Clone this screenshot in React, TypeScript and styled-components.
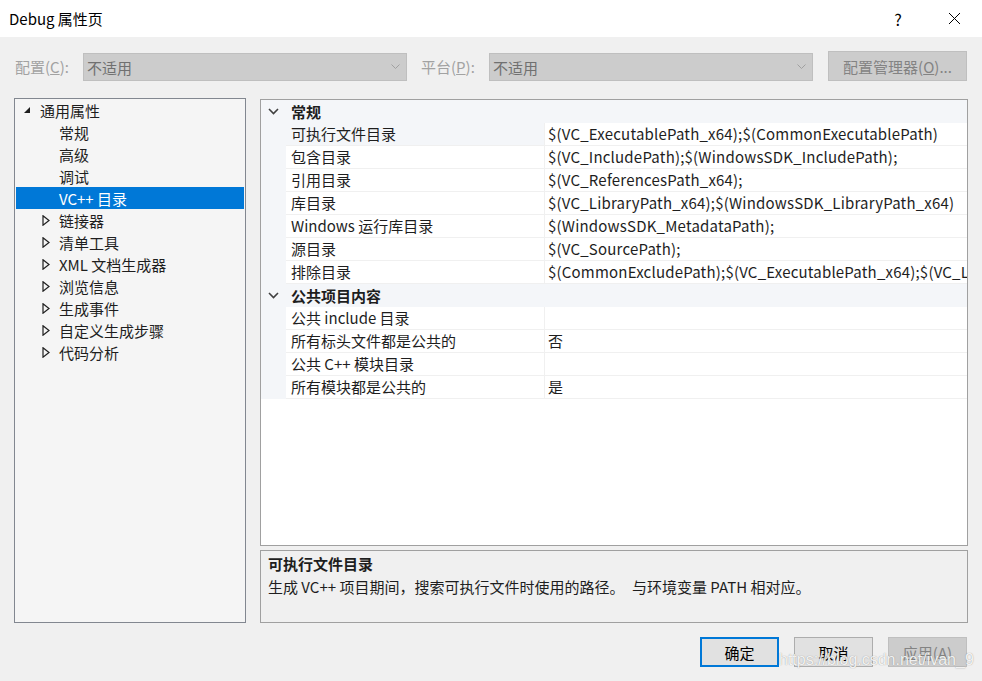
import { createGlobalStyle } from "styled-components";
import styled from "styled-components";

const GlobalStyle = createGlobalStyle`
  html, body {
    margin: 0;
    padding: 0;
    background: #f0f0f0;
  }
  body {
    font-family: "Noto Sans CJK SC", "Noto Sans", sans-serif;
    font-size: 15px;
    color: #1e1e1e;
  }
`;

const Window = styled.div`
  position: relative;
  width: 982px;
  height: 681px;
  background: #f0f0f0;
  display: flex;
  flex-direction: column;
  overflow: hidden;
`;

const TitleBar = styled.div`
  height: 37px;
  background: #ffffff;
  display: flex;
  align-items: center;
  padding-left: 9px;
  font-size: 15px;
  color: #000;
`;

const TitleText = styled.div`
  flex: 1;
`;

const TitleButton = styled.div`
  width: 56px;
  height: 37px;
  display: flex;
  align-items: center;
  justify-content: center;
  font-size: 16px;
  color: #000;
`;

const ConfigRow = styled.div`
  display: flex;
  align-items: flex-end;
  padding: 14px 15px 0 15px;
`;

const FieldLabel = styled.div<{ $gap?: number }>`
  width: 68px;
  flex: none;
  margin-left: ${(p) => p.$gap ?? 0}px;
  height: 28px;
  line-height: 28px;
  color: #a2a2a2;
  white-space: nowrap;
`;

const Combo = styled.div`
  width: 324px;
  flex: none;
  height: 28px;
  box-sizing: border-box;
  background: #cccccc;
  border: 1px solid #bfbfbf;
  display: flex;
  align-items: center;
  padding: 0 6px 0 3px;
  color: #707070;
`;

const ComboText = styled.div`
  flex: 1;
`;

const ManagerButton = styled.div`
  margin-left: 15px;
  width: 139px;
  flex: none;
  height: 30px;
  box-sizing: border-box;
  background: #cccccc;
  border: 1px solid #bfbfbf;
  display: flex;
  align-items: center;
  justify-content: center;
  color: #838383;
`;

const Main = styled.div`
  display: flex;
  gap: 14px;
  padding: 0 14px;
  margin-top: 17px;
  height: 525px;
`;

const TreePanel = styled.div`
  width: 232px;
  flex: none;
  box-sizing: border-box;
  border: 1px solid #828790;
  background: #f5f5f5;
  padding: 0 1px;
`;

const TreeRow = styled.div<{ $level: number; $selected?: boolean }>`
  height: 22px;
  display: flex;
  align-items: center;
  padding-left: ${(p) => 7 + p.$level * 19}px;
  background: ${(p) => (p.$selected ? "#0078d7" : "transparent")};
  color: ${(p) => (p.$selected ? "#ffffff" : "#1e1e1e")};
  white-space: nowrap;
`;

const Expander = styled.div`
  width: 17px;
  height: 22px;
  display: flex;
  align-items: center;
`;

const RightColumn = styled.div`
  flex: 1;
  min-width: 0;
  display: flex;
  flex-direction: column;
  gap: 4px;
`;

const Grid = styled.div`
  margin-top: 1px;
  height: 447px;
  box-sizing: border-box;
  border: 1px solid #a0a0a0;
  background: #ffffff;
  overflow: hidden;
`;

const GridRow = styled.div`
  display: flex;
  height: 23px;
`;

const Gutter = styled.div`
  width: 25px;
  flex: none;
  background: #f4f6f9;
  display: flex;
  align-items: center;
  justify-content: center;
`;

const CategoryName = styled.div`
  flex: 1;
  background: #f4f6f9;
  font-weight: bold;
  line-height: 23px;
  padding-left: 5px;
`;

const LabelCell = styled.div<{ $selected?: boolean }>`
  width: 259px;
  flex: none;
  box-sizing: border-box;
  padding-left: 5px;
  line-height: 22px;
  border-bottom: 1px solid #f0f0f0;
  border-right: 1px solid #f0f0f0;
  background: ${(p) => (p.$selected ? "#f4f6f9" : "#ffffff")};
  white-space: nowrap;
`;

const ValueCell = styled.div`
  flex: 1;
  min-width: 0;
  padding-left: 3px;
  line-height: 22px;
  letter-spacing: 0.2px;
  border-bottom: 1px solid #f0f0f0;
  white-space: nowrap;
  overflow: hidden;
`;

const Description = styled.div`
  height: 73px;
  box-sizing: border-box;
  border: 1px solid #a0a0a0;
  padding: 1px 7px;
  line-height: 23px;
`;

const DescTitle = styled.div`
  font-weight: bold;
`;

const Footer = styled.div`
  display: flex;
  justify-content: flex-end;
  gap: 15px;
  padding: 14px 15px 0 0;
`;

const DialogButton = styled.div<{ $kind: "default" | "normal" | "disabled" }>`
  width: 79px;
  height: 30px;
  box-sizing: border-box;
  display: flex;
  align-items: center;
  justify-content: center;
  background: ${(p) => (p.$kind === "disabled" ? "#cccccc" : "#e1e1e1")};
  border: ${(p) =>
    p.$kind === "default"
      ? "2px solid #0078d7"
      : p.$kind === "disabled"
      ? "1px solid #bfbfbf"
      : "1px solid #adadad"};
  color: ${(p) => (p.$kind === "disabled" ? "#838383" : "#000")};
`;

const Watermark = styled.div`
  position: absolute;
  left: 779px;
  top: 651px;
  font-family: "Liberation Sans", Arial, sans-serif;
  font-size: 16px;
  color: rgba(255, 255, 255, 0.9);
  text-shadow: 0 0 1px rgba(100, 100, 100, 0.7);
  pointer-events: none;
`;

const ChevronDown = ({ color = "#a0a0a0" }: { color?: string }) => (
  <svg width="9" height="6" viewBox="0 0 9 6">
    <polyline points="0.5,0.5 4.5,4.5 8.5,0.5" fill="none" stroke={color} strokeWidth="1" />
  </svg>
);

const GridChevron = () => (
  <svg width="11" height="7" viewBox="0 0 11 7">
    <polyline points="1,1 5.5,5.5 10,1" fill="none" stroke="#404040" strokeWidth="1.6" />
  </svg>
);

const ExpandedArrow = ({ color }: { color: string }) => (
  <svg width="8" height="8" viewBox="0 0 8 8">
    <polygon points="7,1 7,7 1,7" fill={color} />
  </svg>
);

const CollapsedArrow = ({ color }: { color: string }) => (
  <svg width="8" height="11" viewBox="0 0 8 11">
    <polygon points="1,0.8 7,5.5 1,10.2" fill="none" stroke={color} strokeWidth="1.2" />
  </svg>
);

const CloseIcon = () => (
  <svg width="13" height="13" viewBox="0 0 13 13">
    <line x1="1" y1="1" x2="12" y2="12" stroke="#000" strokeWidth="1" />
    <line x1="12" y1="1" x2="1" y2="12" stroke="#000" strokeWidth="1" />
  </svg>
);

type TreeItem = {
  label: string;
  level: number;
  state?: "expanded" | "collapsed";
  selected?: boolean;
};

const treeItems: TreeItem[] = [
  { label: "通用属性", level: 0, state: "expanded" },
  { label: "常规", level: 1 },
  { label: "高级", level: 1 },
  { label: "调试", level: 1 },
  { label: "VC++ 目录", level: 1, selected: true },
  { label: "链接器", level: 1, state: "collapsed" },
  { label: "清单工具", level: 1, state: "collapsed" },
  { label: "XML 文档生成器", level: 1, state: "collapsed" },
  { label: "浏览信息", level: 1, state: "collapsed" },
  { label: "生成事件", level: 1, state: "collapsed" },
  { label: "自定义生成步骤", level: 1, state: "collapsed" },
  { label: "代码分析", level: 1, state: "collapsed" },
];

type Category = {
  name: string;
  props: { label: string; value: string }[];
};

const categories: Category[] = [
  {
    name: "常规",
    props: [
      { label: "可执行文件目录", value: "$(VC_ExecutablePath_x64);$(CommonExecutablePath)" },
      { label: "包含目录", value: "$(VC_IncludePath);$(WindowsSDK_IncludePath);" },
      { label: "引用目录", value: "$(VC_ReferencesPath_x64);" },
      { label: "库目录", value: "$(VC_LibraryPath_x64);$(WindowsSDK_LibraryPath_x64)" },
      { label: "Windows 运行库目录", value: "$(WindowsSDK_MetadataPath);" },
      { label: "源目录", value: "$(VC_SourcePath);" },
      {
        label: "排除目录",
        value: "$(CommonExcludePath);$(VC_ExecutablePath_x64);$(VC_LibraryPath_x64)",
      },
    ],
  },
  {
    name: "公共项目内容",
    props: [
      { label: "公共 include 目录", value: "" },
      { label: "所有标头文件都是公共的", value: "否" },
      { label: "公共 C++ 模块目录", value: "" },
      { label: "所有模块都是公共的", value: "是" },
    ],
  },
];

const App = () => {
  return (
    <Window>
      <GlobalStyle />
      <TitleBar>
        <TitleText>Debug 属性页</TitleText>
        <TitleButton>?</TitleButton>
        <TitleButton>
          <CloseIcon />
        </TitleButton>
      </TitleBar>

      <ConfigRow>
        <FieldLabel>
          配置(<u>C</u>):
        </FieldLabel>
        <Combo>
          <ComboText>不适用</ComboText>
          <ChevronDown />
        </Combo>
        <FieldLabel $gap={14}>
          平台(<u>P</u>):
        </FieldLabel>
        <Combo>
          <ComboText>不适用</ComboText>
          <ChevronDown />
        </Combo>
        <ManagerButton>
          配置管理器(<u>O</u>)...
        </ManagerButton>
      </ConfigRow>

      <Main>
        <TreePanel>
          {treeItems.map((item) => {
            const color = item.selected ? "#ffffff" : "#1e1e1e";
            return (
              <TreeRow key={item.label} $level={item.level} $selected={item.selected}>
                <Expander>
                  {item.state === "expanded" && <ExpandedArrow color={color} />}
                  {item.state === "collapsed" && <CollapsedArrow color={color} />}
                </Expander>
                {item.label}
              </TreeRow>
            );
          })}
        </TreePanel>

        <RightColumn>
          <Grid>
            {categories.map((cat, ci) => (
              <div key={cat.name}>
                <GridRow>
                  <Gutter>
                    <GridChevron />
                  </Gutter>
                  <CategoryName>{cat.name}</CategoryName>
                </GridRow>
                {cat.props.map((p, pi) => (
                  <GridRow key={p.label}>
                    <Gutter />
                    <LabelCell $selected={ci === 0 && pi === 0}>{p.label}</LabelCell>
                    <ValueCell>{p.value}</ValueCell>
                  </GridRow>
                ))}
              </div>
            ))}
          </Grid>
          <Description>
            <DescTitle>可执行文件目录</DescTitle>
            <div>生成 VC++ 项目期间，搜索可执行文件时使用的路径。{"\u3000"}与环境变量 PATH 相对应。</div>
          </Description>
        </RightColumn>
      </Main>

      <Footer>
        <DialogButton $kind="default">确定</DialogButton>
        <DialogButton $kind="normal">取消</DialogButton>
        <DialogButton $kind="disabled">应用(A)</DialogButton>
      </Footer>

      <Watermark>https://blog.csdn.net/ivan_9</Watermark>
    </Window>
  );
};

export default App;
